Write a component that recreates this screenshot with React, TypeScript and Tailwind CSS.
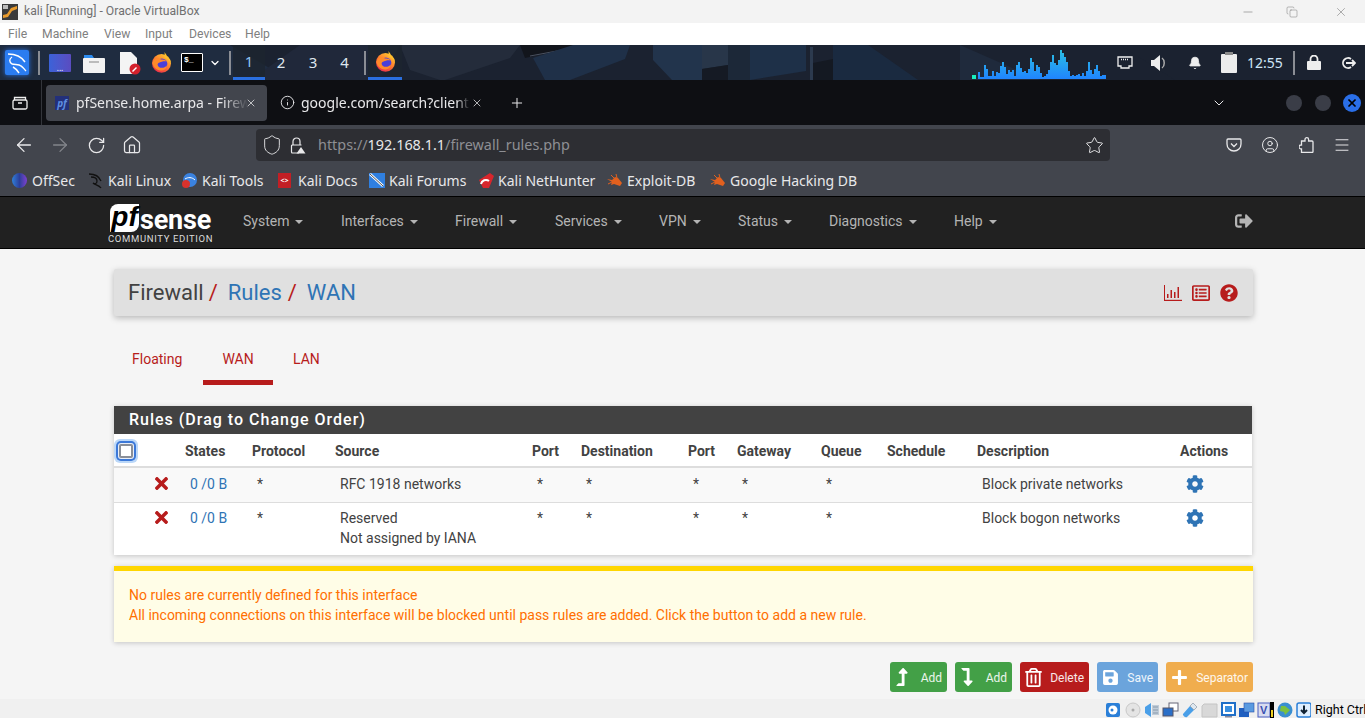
import { ReactNode } from 'react';
import { ArrowLeft, ArrowRight, RotateCw, Home, Shield, Star, CircleUser, Menu, Info, Plus, X, ChevronDown, Minus, Copy, Bell } from 'lucide-react';
import { FaTimes, FaCog, FaQuestionCircle, FaRegListAlt, FaLevelUpAlt, FaLevelDownAlt, FaRegTrashAlt, FaSave, FaPlus, FaSignOutAlt } from 'react-icons/fa';

const graph = [7, 2, 2, 14, 10, 3, 3, 8, 3, 7, 6, 13, 17, 12, 5, 9, 7, 9, 3, 14, 17, 11, 7, 8, 6, 10, 21, 17, 8, 14, 12, 6, 2, 3, 5, 9, 17, 24, 16, 14, 19, 29, 26, 22, 17, 8, 3, 4, 3, 4, 5, 3, 6, 3, 8, 17, 9, 5, 10, 14, 8, 3, 4, 4];

function Firefox({ size = 21 }: { size?: number }) {
    return (
        <svg width={size} height={size} viewBox="0 0 24 24">
            <defs>
                <linearGradient id="ffbody" x1="0.85" y1="0" x2="0.2" y2="1">
                    <stop offset="0" stopColor="#ffd52e" />
                    <stop offset="0.5" stopColor="#ff7a2e" />
                    <stop offset="1" stopColor="#e8254f" />
                </linearGradient>
            </defs>
            <circle cx="12" cy="13" r="10.800" fill="url(#ffbody)" />
            <path d="M15 0c2 2 3 3 3 5 3 2 5 5 5 9-1-4-4-7-8-8 1-2 1-4 0-6z" fill="#ffc02e" />
            <circle cx="12.500" cy="13.500" r="6.200" fill="#4a3fd8" />
            <path d="M1.500 12C3 8 7 6 10 8c3 1 6 0 8 3-3-1-6 0-8 1-3 1-3 3-1 5 3 2 7 1 9-2 0 4-3 6-7 6-5 0-9-4-9.500-9z" fill="#ff8a2a" />
        </svg>
    );
}

function Bug() {
    return (
        <svg width="16" height="14" viewBox="0 0 16 14" className="shrink-0">
            <path d="M0 5l5 1 3-3 3 1 4 5-2 3-6-2-3 1 1-3z" fill="#e2601e" />
            <path d="M4 1l3 3M9 0l1 4M1 10l4-2" stroke="#e2601e" strokeWidth="1" />
        </svg>
    );
}

function Bookmark({ icon, label, width }: { icon: ReactNode; label: string; width: string }) {
    return (
        <div className={`flex items-center ${width}`}>
            <span className="w-[20px] flex items-center shrink-0">{icon}</span>
            <span className="whitespace-nowrap">{label}</span>
        </div>
    );
}

function NavItem({ label, width }: { label: string; width: string }) {
    return (
        <div className={`flex items-center ${width}`}>
            <span>{label}</span>
            <span className="ml-[6px] w-0 h-0 border-x-[4px] border-x-transparent border-t-[4px] border-t-[#b4b4b4]" />
        </div>
    );
}

function ActionButton({ icon, label, width, color }: { icon: ReactNode; label: string; width: string; color: string }) {
    return (
        <button className={`h-[30px] rounded-[3px] flex items-center justify-between pl-[5px] pr-[5px] text-[12px] text-white/90 ${width} ${color}`}>
            <span className="flex items-center text-white">{icon}</span>
            <span className="pt-px">{label}</span>
        </button>
    );
}

function Slot({ children }: { children: ReactNode }) {
    return <div className="w-[36px] h-[32px] flex items-center justify-center shrink-0">{children}</div>;
}

const colsClass = 'grid grid-cols-[71px_67px_83px_197px_49px_107px_49px_84px_66px_90px_203px_72px]';

function RuleRow({ rowClass, source, description }: { rowClass: string; source: ReactNode; description: string }) {
    return (
        <div className={`${colsClass} ${rowClass}`}>
            <div className="pl-[38px]"><FaTimes className="w-[19px] h-[19px] text-[#b71c1c]" /></div>
            <div className="pl-[5px] text-[#2f74b5]">0 /0 B</div>
            <div className="pl-[5px]">*</div>
            <div className="pl-[5px]">{source}</div>
            <div className="pl-[5px]">*</div>
            <div className="pl-[5px]">*</div>
            <div className="pl-[5px]">*</div>
            <div className="pl-[5px]">*</div>
            <div className="pl-[5px]">*</div>
            <div />
            <div className="pl-[5px]">{description}</div>
            <div className="pl-[6px] pt-[1px]"><FaCog className="w-[18px] h-[18px] text-[#2f74b5]" /></div>
        </div>
    );
}

function TitleBar() {
    return (
        <div className="h-[23px] bg-[#f3f3f3] flex items-center font-['Roboto',sans-serif] text-[12.200px] text-[#707070]">
            <svg width="16" height="16" viewBox="0 0 16 16" className="ml-[2px] mr-[6px]">
                <rect width="16" height="16" fill="#3a3a3a" />
                <path d="M1 14l5-1 4-6 5-2V2l-6 2-4 6-4 1z" fill="#e89a2c" />
                <rect x="1" y="1" width="5" height="4" fill="#bbb" />
            </svg>
            <span>kali [Running] - Oracle VirtualBox</span>
            <div className="ml-auto flex items-center text-[#777]">
                <Minus className="w-[14px] h-[14px] mr-[31px]" strokeWidth={1} />
                <Copy className="w-[12px] h-[12px] mr-[36px]" strokeWidth={1} />
                <X className="w-[14px] h-[14px] mr-[17px]" strokeWidth={1} />
            </div>
        </div>
    );
}

function MenuBar() {
    return (
        <div className="h-[22px] bg-white flex items-center pl-[8px] font-['Roboto',sans-serif] text-[12.200px] text-[#808080]">
            <span className="w-[34px]">File</span>
            <span className="w-[62px]">Machine</span>
            <span className="w-[41px]">View</span>
            <span className="w-[44px]">Input</span>
            <span className="w-[56px]">Devices</span>
            <span>Help</span>
        </div>
    );
}

function KaliPanel() {
    return (
        <div className="relative h-[35px] bg-[#1b2230] flex items-center font-['Noto_Sans',sans-serif] text-white overflow-hidden">
            {/* wallpaper */}
            <svg className="absolute inset-0" width="1365" height="35" viewBox="0 0 1365 35">
                <rect width="1365" height="35" fill="#1b2230" />
                <path d="M0 0h230l60 35H0z" fill="#1f2c40" />
                <path d="M300 0h100l-20 35H250z" fill="#20283a" />
                <path d="M400 0h120l-10 13-65 22H440L410 25z" fill="#242c3b" />
                <path d="M520 0h53v3l-48 10z" fill="#12151c" />
                <path d="M530 11l43-8" stroke="#4a5160" strokeWidth="1" />
                <path d="M573 0h57l-5 14-55 21h-25l-12-22z" fill="#1f3048" />
                <path d="M653 0h49v35h-30l-19-20z" fill="#22344c" />
                <path d="M702 0h26v20l-26 4z" fill="#283649" />
                <path d="M702 24l26-4v15h-26z" fill="#151a24" />
                <path d="M728 0h22v35h-22z" fill="#1c2838" />
                <path d="M750 0h56v26l-56 9z" fill="#1e3048" />
                <path d="M810 2h3v33h-3z" fill="#2c3a4e" />
                <path d="M813 18l20-4v21h-20z" fill="#141922" />
                <path d="M833 0h35l50 35h-85z" fill="#1a2a40" />
                <path d="M960 0l80 35h-80z" fill="#1f2a3c" />
                <path d="M1120 0h245v35h-190z" fill="#1b2230" />
            </svg>
            <div className="relative flex items-center h-full w-full">
                <div className="ml-[5px] w-[24px] h-[25px] rounded-[2px] bg-[#2b7cf0] shadow-[0_0_5px_#2672e6] flex items-center justify-center">
                    <svg width="22" height="22" viewBox="0 0 22 22" fill="none" stroke="#fff" strokeWidth="1.400">
                        <path d="M2 2c6 0 13 2 17 8M6 5c-3 2-3 5 0 7 3 1 7 0 9 2 2 1 3 3 5 5M7 15c2 1 4 3 6 6" />
                    </svg>
                </div>
                <div className="ml-[9px] w-[2px] h-[24px] bg-[#8a8d94]" />
                <div className="ml-[9px] w-[22px] h-[18px] bg-gradient-to-r from-[#3a62d8] to-[#5a4cc0] rounded-[1px] flex items-end justify-center text-[8px] leading-[8px]">...</div>
                <svg className="ml-[12px]" width="22" height="20" viewBox="0 0 22 20">
                    <path d="M1 2h8l2 3H1z" fill="#2d8cf0" />
                    <rect x="0" y="5" width="22" height="15" rx="1" fill="#f2f2f2" />
                    <rect x="6" y="8" width="10" height="2" fill="#bbb" />
                </svg>
                <svg className="ml-[14px]" width="22" height="24" viewBox="0 0 22 24">
                    <path d="M1 1h11l6 6v16H1z" fill="#f4f4f4" />
                    <circle cx="16" cy="18" r="5.500" fill="#d3212c" />
                    <path d="M13.500 20.500l4-4" stroke="#fff" strokeWidth="1.500" />
                </svg>
                <span className="ml-[10px] flex"><Firefox /></span>
                <div className="ml-[9px] w-[22px] h-[19px] bg-black border border-white rounded-[1px] text-[8px] leading-[11px] pl-[2px] font-['Liberation_Mono',monospace] font-bold">$_</div>
                <ChevronDown className="ml-[6px] w-[12px] h-[12px]" strokeWidth={2.500} />
                <div className="ml-[8px] w-[2px] h-[24px] bg-[#8a8d94]" />
                <div className="ml-[2px] flex h-full text-[15px] text-[#dfe6ee]">
                    <div className="w-[32px] h-full bg-[#1d2530]/80 flex items-center justify-center border-b-[3px] border-b-[#2a6fe0] text-[#8ec4f0]">1</div>
                    <div className="w-[32px] flex items-center justify-center">2</div>
                    <div className="w-[32px] flex items-center justify-center">3</div>
                    <div className="w-[31px] flex items-center justify-center">4</div>
                </div>
                <div className="ml-[4px] w-[2px] h-[24px] bg-[#8a8d94]" />
                <div className="ml-[2px] w-[34px] h-full bg-[#1d2530]/80 border-b-[3px] border-b-[#2a6fe0] flex items-center justify-center"><Firefox /></div>

                {/* cpu graph */}
                <svg className="absolute left-[972px] top-0" width="136" height="35" viewBox="0 0 136 35">
                    <defs>
                        <linearGradient id="cpu" x1="0" y1="35" x2="0" y2="5" gradientUnits="userSpaceOnUse">
                            <stop offset="0" stopColor="#1f82ff" />
                            <stop offset="1" stopColor="#2bc0e4" />
                        </linearGradient>
                    </defs>
                    <rect x="0" y="30" width="4" height="4" fill="#19f0c0" />
                    {graph.map((h, i) => (
                        <rect key={i} x={6 + i * 2} y={34 - h} width="2" height={h} fill="url(#cpu)" />
                    ))}
                </svg>
                <div className="absolute right-0 top-0 h-full w-[258px] flex items-center text-[#ececec]">
                    <svg className="ml-[10px]" width="16" height="13" viewBox="0 0 16 13" fill="none" stroke="#eee" strokeWidth="1.300">
                        <path d="M1 1h14v9h-3v2H4v-2H1z" />
                        <path d="M4 3.500h8" strokeDasharray="1 1" />
                    </svg>
                    <svg className="ml-[18px]" width="18" height="16" viewBox="0 0 18 16">
                        <path d="M0 5h3l6-5v16l-6-5H0z" fill="#eee" />
                        <path d="M11 3c3 2 3 8 0 10" stroke="#aaa" strokeWidth="1.500" fill="none" />
                    </svg>
                    <Bell className="ml-[19px] w-[14px] h-[14px] fill-[#eee]" strokeWidth={1.500} />
                    <svg className="ml-[19px]" width="16" height="21" viewBox="0 0 16 21">
                        <rect x="0" y="2" width="16" height="19" rx="1" fill="#ececec" />
                        <rect x="4" y="0" width="8" height="3" fill="#8a8a8a" />
                    </svg>
                    <span className="ml-[10px] text-[14px] text-[#cfe6f8]">12:55</span>
                    <div className="ml-[10px] w-[2px] h-[24px] bg-[#8a8d94]" />
                    <svg className="ml-[12px]" width="14" height="15" viewBox="0 0 14 15">
                        <rect x="0" y="6" width="14" height="9" rx="1" fill="#eee" />
                        <path d="M3.500 6V4a3.500 3.500 0 0 1 7 0v2" fill="none" stroke="#eee" strokeWidth="1.800" />
                    </svg>
                    <svg className="ml-[20px]" width="15" height="14" viewBox="0 0 15 14" fill="none" stroke="#eee" strokeWidth="1.800">
                        <path d="M10 3a5 5 0 1 0 0 8" />
                        <path d="M5 7h9M11 4l3 3-3 3" />
                    </svg>
                </div>
            </div>
        </div>
    );
}

function TabBar() {
    return (
        <div className="h-[45px] bg-[#0e0f13] flex items-center font-['Noto_Sans',sans-serif] text-[14px] text-[#e8e8ea]">
            <svg className="ml-[12px]" width="16" height="16" viewBox="0 0 16 16" fill="none" stroke="#eee" strokeWidth="1.300">
                <rect x="1" y="5" width="14" height="9" rx="1.500" />
                <path d="M2.500 5V2.500h11V5M6 8h4" />
            </svg>
            <div className="ml-[13px] w-px h-[45px] bg-[#33353b]" />
            <div className="ml-[4px] w-[221px] h-[36px] rounded-[4px] bg-[#42454d] flex items-center pl-[9px] relative">
                <div className="w-[14px] h-[14px] bg-[#23307a] text-[10px] leading-[14px] italic font-bold text-[#5f8fe0] text-center shrink-0">pf</div>
                <span className="ml-[7px] w-[172px] whitespace-nowrap [mask-image:linear-gradient(to_right,black_85%,transparent)]">pfSense.home.arpa - Firew</span>
                <X className="absolute left-[199px] w-[12px] h-[12px]" strokeWidth={1.500} />
            </div>
            <Info className="ml-[13px] w-[15px] h-[15px]" strokeWidth={1.500} />
            <span className="ml-[6px] w-[169px] whitespace-nowrap [mask-image:linear-gradient(to_right,black_92%,transparent)]">google.com/search?client</span>
            <X className="ml-[1px] w-[12px] h-[12px]" strokeWidth={1.500} />
            <Plus className="ml-[26px] w-[16px] h-[16px]" strokeWidth={1.500} />
            <ChevronDown className="absolute left-[1211px] w-[16px] h-[16px]" strokeWidth={1.500} />
            <div className="absolute left-[1286px] w-[16px] h-[16px] rounded-full bg-[#3a3d47]" />
            <div className="absolute left-[1315px] w-[16px] h-[16px] rounded-full bg-[#3a3d47]" />
            <div className="absolute left-[1343px] w-[18px] h-[18px] rounded-full bg-[#2a6fe8] flex items-center justify-center">
                <X className="w-[12px] h-[12px] text-black" strokeWidth={3.500} />
            </div>
        </div>
    );
}

function NavBar() {
    return (
        <div className="h-[36px] bg-[#42454d] flex items-start pt-[4px] pl-[6px] text-[#e8e8ea] font-['Noto_Sans',sans-serif]">
            <Slot><ArrowLeft className="w-[22px] h-[22px]" strokeWidth={1.400} /></Slot>
            <Slot><ArrowRight className="w-[22px] h-[22px] text-[#83858b]" strokeWidth={1.400} /></Slot>
            <Slot><RotateCw className="w-[19px] h-[19px]" strokeWidth={1.600} /></Slot>
            <Slot><Home className="w-[20px] h-[20px]" strokeWidth={1.500} /></Slot>
            <div className="ml-[106px] w-[854px] h-[32px] rounded-[4px] bg-[#2d2e33] flex items-center relative">
                <Shield className="ml-[5px] w-[22px] h-[22px]" strokeWidth={1} />
                <svg className="ml-[7px]" width="16" height="17" viewBox="0 0 16 17" fill="none" stroke="#e8e8ea" strokeWidth="1.200">
                    <path d="M3 8V4.500a3.500 3.500 0 0 1 7 0V8" />
                    <path d="M9 16H2.500a1 1 0 0 1-1-1V9a1 1 0 0 1 1-1h9" />
                    <path d="M11 10l4.500 6.500h-9z" fill="#e8e8ea" stroke="none" />
                </svg>
                <span className="ml-[12px] text-[14.400px] text-[#8e8f94]">https://<span className="text-[#e8e8ea]">192.168.1.1</span>/firewall_rules.php</span>
                <Star className="absolute left-[829px] w-[19px] h-[19px]" strokeWidth={1.200} />
            </div>
            <div className="ml-[106px] flex">
                <Slot>
                    <svg width="16" height="16" viewBox="0 0 16 16" fill="none" stroke="#e8e8ea" strokeWidth="1.300">
                        <path d="M2 2h12a1 1 0 0 1 1 1v4c0 4-3 7-7 7s-7-3-7-7V3a1 1 0 0 1 1-1z" />
                        <path d="M5 6.500l3 3 3-3" />
                    </svg>
                </Slot>
                <Slot><CircleUser className="w-[18px] h-[18px]" strokeWidth={1.300} /></Slot>
                <Slot>
                    <svg width="15" height="16" viewBox="0 0 15 16" fill="none" stroke="#e8e8ea" strokeWidth="1.300">
                        <path d="M6 4V2.500a1.800 1.800 0 0 1 3.600 0V4h3.400a1 1 0 0 1 1 1v9.500a1 1 0 0 1-1 1H2.500V12H2a2 2 0 0 1 0-4h.5V4z" />
                    </svg>
                </Slot>
                <Slot><Menu className="w-[18px] h-[18px]" strokeWidth={1.300} /></Slot>
            </div>
        </div>
    );
}

function Bookmarks() {
    return (
        <div className="h-[35px] bg-[#42454d] flex items-center pl-[12px] pt-[4px] text-[14px] text-[#e8e8ea] font-['Noto_Sans',sans-serif]">
            <Bookmark
                width="w-[76px]"
                label="OffSec"
                icon={<div className="w-[15px] h-[15px] rounded-full bg-gradient-to-r from-[#2f7fd8] via-[#2b3f9b] to-[#7c3fd0]" />}
            />
            <Bookmark
                width="w-[94px]"
                label="Kali Linux"
                icon={
                    <svg width="16" height="16" viewBox="0 0 16 16" fill="none" stroke="#111" strokeWidth="1.300">
                        <path d="M1 1c5 0 10 2 12 7M3 4c3 0 6 1 6 4s-2 3-4 2c2 2 6 2 8 5" />
                    </svg>
                }
            />
            <Bookmark
                width="w-[96px]"
                label="Kali Tools"
                icon={
                    <svg width="15" height="15" viewBox="0 0 15 15">
                        <circle cx="8" cy="7" r="7" fill="#3a82e0" />
                        <path d="M3 6c3-2 7-2 10 1" stroke="#fff" strokeWidth="1" fill="none" />
                        <circle cx="4" cy="11" r="4" fill="#d8322c" />
                    </svg>
                }
            />
            <Bookmark
                width="w-[91px]"
                label="Kali Docs"
                icon={
                    <div className="w-[13px] h-[15px] bg-[#c21f25] text-white text-[7px] leading-[15px] text-center font-bold">{'<>'}</div>
                }
            />
            <Bookmark
                width="w-[109px]"
                label="Kali Forums"
                icon={
                    <svg width="16" height="15" viewBox="0 0 16 15">
                        <rect width="16" height="15" fill="#2f7fe0" />
                        <path d="M1 1l13 12" stroke="#fff" strokeWidth="2.500" />
                        <path d="M1 1l13 12" stroke="#222" strokeWidth="0.800" />
                    </svg>
                }
            />
            <Bookmark
                width="w-[129px]"
                label="Kali NetHunter"
                icon={
                    <svg width="16" height="15" viewBox="0 0 16 15">
                        <path d="M1 7L12 0l4 3-5 12H5z" fill="#d8262c" />
                        <path d="M3 11a5 5 0 0 1 8-3" stroke="#fff" strokeWidth="2" fill="none" />
                    </svg>
                }
            />
            <Bookmark width="w-[103px]" label="Exploit-DB" icon={<Bug />} />
            <Bookmark width="w-[160px]" label="Google Hacking DB" icon={<Bug />} />
        </div>
    );
}

function PfNav() {
    return (
        <div className="h-[53px] pb-[2px] bg-[#212121] border-t border-t-black border-b border-b-black flex items-center font-['Roboto',sans-serif] text-[14px] text-[#b4b4b4] relative">
            <div className="ml-[108px] w-[135px] relative self-start h-[49px]">
                <div className="absolute left-[2px] top-[7px] w-[29px] h-[28px] bg-white rounded-tl-[8px] rounded-br-[8px] text-black italic font-bold font-['Liberation_Sans',sans-serif] text-[28px] leading-[26px] text-center">pf</div>
                <span className="absolute left-[32px] top-[11px] text-white font-bold text-[27px] leading-[24px] tracking-[-0.200px]">sense</span>
                <span className="absolute left-0 top-[36px] text-[9.500px] leading-[12px] tracking-[0.650px] text-[#dcdcdc] whitespace-nowrap">COMMUNITY EDITION</span>
            </div>
            <NavItem label="System" width="w-[98px]" />
            <NavItem label="Interfaces" width="w-[114px]" />
            <NavItem label="Firewall" width="w-[100px]" />
            <NavItem label="Services" width="w-[104px]" />
            <NavItem label="VPN" width="w-[79px]" />
            <NavItem label="Status" width="w-[91px]" />
            <NavItem label="Diagnostics" width="w-[125px]" />
            <NavItem label="Help" width="w-[80px]" />
            <FaSignOutAlt className="absolute left-[1235px] top-[15px] w-[18px] h-[18px] text-[#b4b4b4]" />
        </div>
    );
}

function PageHeader() {
    return (
        <div className="w-[1139px] h-[47px] rounded-[2px] bg-[#e0e0e0] shadow-[0_2px_6px_rgba(0,0,0,0.25)] flex items-center pl-[14px] pr-[15px] text-[22px] text-[#424242]">
            <span>Firewall</span>
            <span className="ml-[5px] text-[#b71c1c]">/</span>
            <span className="ml-[10px] text-[#2f74b5]">Rules</span>
            <span className="ml-[6px] text-[#b71c1c]">/</span>
            <span className="ml-[10px] text-[#2f74b5]">WAN</span>
            <div className="ml-auto flex items-center text-[#b71c1c]">
                <svg width="18" height="16" viewBox="0 0 18 16" fill="#b71c1c">
                    <rect x="0" y="0" width="1" height="16" />
                    <rect x="0" y="14.800" width="18" height="1.200" />
                    <rect x="3" y="9" width="1.500" height="4" />
                    <rect x="6.500" y="5" width="1.500" height="8" />
                    <rect x="10" y="7" width="1.500" height="6" />
                    <rect x="13.500" y="2" width="1.500" height="11" />
                </svg>
                <FaRegListAlt className="ml-[10px] w-[18px] h-[18px]" />
                <FaQuestionCircle className="ml-[10px] w-[18px] h-[18px]" />
            </div>
        </div>
    );
}

function Tabs() {
    return (
        <div className="mt-[20px] h-[49px] flex text-[14px] text-[#b71c1c]">
            <div className="w-[89px] pl-[18px] pt-[13px]">Floating</div>
            <div className="w-[70px] h-full border-b-[5px] border-b-[#b71c1c] text-center pt-[13px]">WAN</div>
            <div className="pl-[20px] pt-[13px]">LAN</div>
        </div>
    );
}

function RulesPanel() {
    return (
        <div className="mt-[21px] w-[1138px] bg-white shadow-[0_1px_5px_rgba(0,0,0,0.2)] text-[14px] leading-[20px] text-[#424242]">
            <div className="h-[28px] bg-[#424242] text-white pl-[15px] text-[16px] leading-[28px] font-medium tracking-[1px]">Rules (Drag to Change Order)</div>
            <div className={`${colsClass} h-[34px] pt-[2px] border-b-[2px] border-b-[#dddddd] font-bold items-center`}>
                <div className="pl-[5px] h-full flex items-center">
                    <div className="w-[14px] h-[14px] rounded-[2px] border-2 border-[#8a8f98] bg-white shadow-[0_0_0_1px_#e8eef8,0_0_0_3px_#3b78d8,0_0_0_5px_#bcd8f8]" />
                </div>
                <div>States</div>
                <div>Protocol</div>
                <div>Source</div>
                <div>Port</div>
                <div>Destination</div>
                <div>Port</div>
                <div>Gateway</div>
                <div>Queue</div>
                <div>Schedule</div>
                <div>Description</div>
                <div>Actions</div>
            </div>
            <RuleRow rowClass="h-[35px] pt-[6px] bg-[#f9f9f9] border-b border-b-[#dddddd]" source="RFC 1918 networks" description="Block private networks" />
            <RuleRow
                rowClass="h-[52px] pt-[5px]"
                source={<>Reserved<br />Not assigned by IANA</>}
                description="Block bogon networks"
            />
        </div>
    );
}

function StatusBar() {
    return (
        <div className="h-[19px] pt-[2px] bg-[#f0f0f0] flex items-center justify-end font-['Roboto',sans-serif] text-[12.500px] text-black">
            <svg width="205" height="16" viewBox="0 0 205 16" className="mr-[4px]">
                {/* hard disk */}
                <rect x="0" y="1" width="14" height="14" rx="2" fill="#2a7fd8" />
                <circle cx="7" cy="8" r="4.500" fill="#fff" />
                <circle cx="6" cy="8" r="1.500" fill="#2a7fd8" />
                {/* optical */}
                <circle cx="27" cy="8" r="7" fill="#e4e4e4" stroke="#c8c8c8" />
                <circle cx="27" cy="8" r="1.500" fill="#aaa" />
                {/* audio */}
                <path d="M39 5l6-4v14l-6-4z" fill="#4a9fe8" />
                <rect x="46" y="3" width="7" height="10" fill="#c0ccd8" />
                <path d="M47 5h5M47 8h5M47 11h5" stroke="#8899aa" strokeWidth="1" />
                {/* network */}
                <rect x="63" y="1" width="9" height="8" fill="#fff" stroke="#667" strokeWidth="1" />
                <rect x="57" y="6" width="10" height="8" fill="#2a6fc8" stroke="#556" strokeWidth="1" />
                {/* usb */}
                <path d="M77 12l7-8 4 4-7 7a3 3 0 0 1-4-3z" fill="#4a9fe8" />
                <path d="M84 4l3-3 4 4-3 3z" fill="#dfe8f0" stroke="#7a8a9a" strokeWidth="0.600" />
                {/* shared folder */}
                <path d="M98 2h13v13H96V4z" fill="#d8d8d8" stroke="#c4c4c4" />
                {/* display */}
                <rect x="116" y="1" width="13" height="12" fill="#fff" stroke="#1f6fc8" strokeWidth="2" />
                <rect x="119" y="4" width="7" height="6" fill="#3a8fe0" />
                <rect x="119" y="14" width="7" height="1.500" fill="#889" />
                {/* recording */}
                <rect x="133" y="6" width="10" height="9" fill="#1f5fc0" />
                <rect x="138" y="1" width="10" height="9" fill="#5a9ae0" stroke="#2a4fa8" strokeWidth="0.600" />
                {/* vm state */}
                <rect x="152" y="1" width="12" height="14" fill="#d8dcf0" stroke="#4a5fc0" strokeWidth="1" />
                <text x="154" y="12" fontSize="11" fontWeight="700" fill="#3a4fb0" fontFamily="'Liberation Sans', sans-serif">V</text>
                <rect x="164" y="0" width="4" height="16" fill="#000" />
                <rect x="165" y="8" width="2" height="7" fill="#f0d020" />
                {/* globe */}
                <circle cx="179" cy="8" r="7.500" fill="#3a8fd0" />
                <path d="M175 4l4 0 5 4-5 5-1-3-4-1z" fill="#7ac040" />
                {/* download */}
                <rect x="191" y="1" width="14" height="14" rx="2" fill="#dfefff" stroke="#2a7fd8" strokeWidth="1.500" />
                <path d="M198 3.500v7M195 8l3 3 3-3" stroke="#123" strokeWidth="2" fill="none" />
            </svg>
            <span className="w-[50px] whitespace-nowrap pt-[2px]">Right Ctrl</span>
        </div>
    );
}

export default function App() {
    return (
        <div className="relative w-[1365px] h-[718px] overflow-hidden flex flex-col bg-[#f5f5f5]">
            <TitleBar />
            <MenuBar />
            <KaliPanel />
            <TabBar />
            <NavBar />
            <Bookmarks />
            <PfNav />

            <div className="flex-1 pl-[114px] pt-[20px] font-['Roboto',sans-serif]">
                <PageHeader />
                <Tabs />
                <RulesPanel />

                <div className="mt-[11px] w-[1139px] h-[76px] border-t-[5px] border-t-[#ffd600] bg-[#fffde7] shadow-[0_1px_5px_rgba(0,0,0,0.2)] pl-[15px] pt-[14px] text-[14px] leading-[20px] text-[#ff6f00]">
                    <div>No rules are currently defined for this interface</div>
                    <div>All incoming connections on this interface will be blocked until pass rules are added. Click the button to add a new rule.</div>
                </div>

                <div className="mt-[20px] w-[1139px] flex justify-end gap-[8px]">
                    <ActionButton width="w-[57px]" color="bg-[#43a047]" label="Add" icon={<FaLevelUpAlt className="w-[18px] h-[18px] -ml-[2px]" />} />
                    <ActionButton width="w-[57px]" color="bg-[#43a047]" label="Add" icon={<FaLevelDownAlt className="w-[18px] h-[18px] -ml-[2px]" />} />
                    <ActionButton width="w-[69px]" color="bg-[#b71c1c]" label="Delete" icon={<FaRegTrashAlt className="w-[19px] h-[19px] -ml-[1px]" />} />
                    <ActionButton width="w-[61px]" color="bg-[#6ba4dc]" label="Save" icon={<FaSave className="w-[17px] h-[17px]" />} />
                    <ActionButton width="w-[87px]" color="bg-[#f0ad4e]" label="Separator" icon={<FaPlus className="w-[17px] h-[17px]" />} />
                </div>
            </div>

            <StatusBar />
        </div>
    );
}
